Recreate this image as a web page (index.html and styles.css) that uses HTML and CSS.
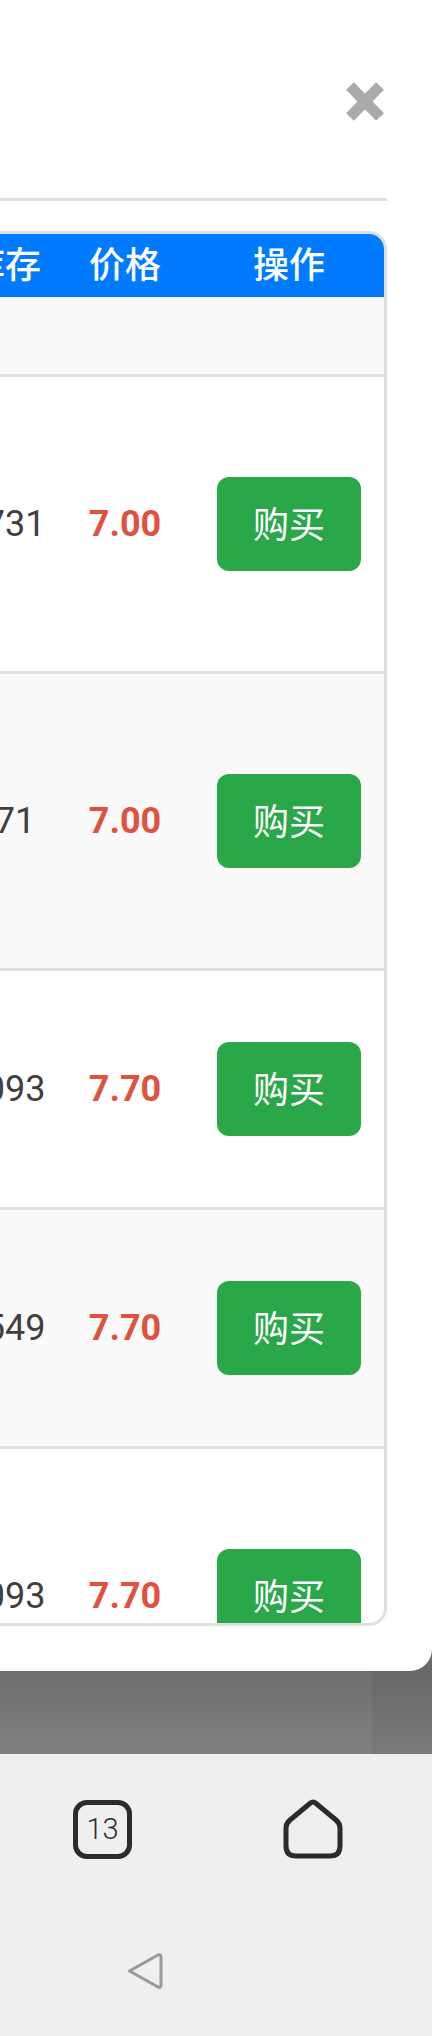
FILE: index.html
```html
<!DOCTYPE html>
<html lang="zh-CN">
<head>
  <meta charset="UTF-8" />
  <meta name="viewport" content="width=device-width, initial-scale=1.0"/>
  <title>购买</title>
  <link rel="stylesheet" href="styles.css">
</head>
<body>
  <div class="backdrop">
    <div class="modal">
      <div class="modal-header">
        <svg class="close" viewBox="0 0 38 39" aria-label="关闭">
          <path d="M4 4 L34 35 M34 4 L4 35" />
        </svg>
      </div>
      <div class="table-box">
        <table class="goods">
          <colgroup>
            <col class="col-stock">
            <col class="col-price">
            <col class="col-action">
          </colgroup>
          <thead>
            <tr>
              <th>库存</th>
              <th>价格</th>
              <th>操作</th>
            </tr>
          </thead>
          <tbody>
            <tr class="row-empty"><td colspan="3"></td></tr>
            <tr class="row-tall">
              <td>1731</td>
              <td class="price">7.00</td>
              <td><button class="buy">购买</button></td>
            </tr>
            <tr class="row-tall odd">
              <td>871</td>
              <td class="price">7.00</td>
              <td><button class="buy">购买</button></td>
            </tr>
            <tr class="row-short">
              <td>1093</td>
              <td class="price">7.70</td>
              <td><button class="buy">购买</button></td>
            </tr>
            <tr class="row-short odd">
              <td>2549</td>
              <td class="price">7.70</td>
              <td><button class="buy">购买</button></td>
            </tr>
            <tr class="row-tall">
              <td>1093</td>
              <td class="price">7.70</td>
              <td><button class="buy">购买</button></td>
            </tr>
          </tbody>
        </table>
      </div>
    </div>
  </div>

  <div class="nav">
    <div class="nav-row">
      <div class="tabs-icon">13</div>
      <svg class="home-icon" viewBox="0 0 60 60">
        <path d="M27.500 4 Q30 2 32.500 4 L53 21 Q57 24.500 57 29 V47 Q57 57 47 57 H13 Q3 57 3 47 V29 Q3 24.500 7 21 Z" />
      </svg>
    </div>
    <div class="nav-row nav-row-back">
      <svg class="back-icon" viewBox="0 0 36 36">
        <path d="M2.500 18 L31 2 Q34 1 34 4 V32 Q34 35 31 34 Z" />
      </svg>
    </div>
  </div>
</body>
</html>
```

FILE: styles.css
```css
body {
  margin: 0;
  height: 2036px;
  overflow: hidden;
  font-family: Roboto, "Noto Sans CJK SC", sans-serif;
  background: #efefef;
}

.backdrop {
  height: 1754px;
  overflow: hidden;
  background:
    linear-gradient(to right, transparent 372px, rgba(0, 0, 0, 0.05) 372px),
    linear-gradient(to bottom, #6e6e6e 1671px, #808080 1754px);
}

.modal {
  height: 1691px;
  margin-top: -20px;
  box-sizing: border-box;
  background: #fff;
  border-radius: 0 22px 22px 0;
  padding-right: 45px;
}

.modal-header {
  height: 221px;
  box-sizing: border-box;
  border-bottom: 3px solid #e0e0e0;
  padding-top: 102px;
  display: flex;
  justify-content: flex-end;
  padding-right: 3px;
}

.close {
  width: 38px;
  height: 39px;
}

.close path {
  fill: none;
  stroke: #aaa;
  stroke-width: 11;
}

.table-box {
  height: 1395px;
  margin-top: 30px;
  box-sizing: border-box;
  display: flex;
  justify-content: flex-end;
  overflow: hidden;
  border: 3px solid #e0e0e0;
  border-left: none;
  border-radius: 0 18px 18px 0;
}

.goods {
  flex-shrink: 0;
  width: 430px;
  table-layout: fixed;
  border-collapse: collapse;
  align-self: flex-start;
  color: #404040;
}

.col-stock { width: 102px; }
.col-price { width: 138px; }
.col-action { width: 190px; }

.goods th {
  height: 63px;
  box-sizing: border-box;
  padding: 0 0 7px;
  background: #007bff;
  color: #fff;
  font-size: 36px;
  font-weight: 500;
  text-align: center;
}

.goods td {
  padding: 0;
  text-align: center;
  font-size: 36px;
  border-bottom: 3px solid #e0e0e0;
}

.row-empty td { height: 77px; background: #f9f9f9; }
.row-tall td { height: 294px; }
.row-short td { height: 236px; }
.odd td { background: #f9f9f9; }

.goods td.price {
  color: #e05140;
  font-weight: 700;
}

.buy {
  display: block;
  width: 144px;
  height: 94px;
  margin: 0 auto;
  padding: 0 0 5px;
  border: none;
  border-radius: 12px;
  background: #2aa748;
  color: #fff;
  font-family: "Noto Sans CJK SC", sans-serif;
  font-size: 36px;
}

.nav-row {
  display: flex;
  align-items: center;
  padding: 45px 0 0 73px;
  gap: 151px;
}

.nav-row-back {
  padding: 94px 0 0 127px;
}

.tabs-icon {
  width: 59px;
  height: 59px;
  box-sizing: border-box;
  display: flex;
  align-items: center;
  justify-content: center;
  border: 5px solid #2b2b2b;
  border-radius: 14px;
  color: #2b2b2b;
  font-size: 29px;
  font-weight: 300;
}

.home-icon {
  width: 60px;
  height: 60px;
}

.home-icon path {
  fill: none;
  stroke: #2b2b2b;
  stroke-width: 5;
  stroke-linejoin: round;
}

.back-icon {
  width: 36px;
  height: 36px;
}

.back-icon path {
  fill: none;
  stroke: #999;
  stroke-width: 3;
  stroke-linejoin: round;
}
```
